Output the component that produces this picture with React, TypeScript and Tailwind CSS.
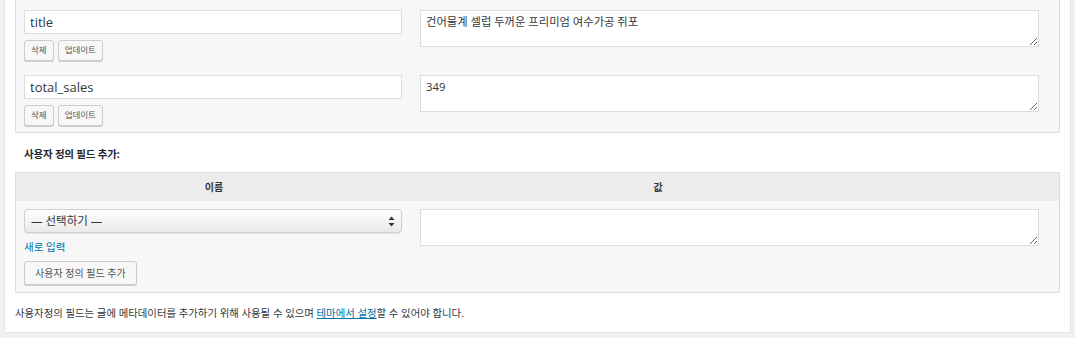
const font = { fontFamily: '"Open Sans", "Noto Sans CJK KR", sans-serif' }

type MetaRow = {
  name: string
  value: string
}

const rows: MetaRow[] = [
  { name: 'title', value: '건어물계 셀럽 두꺼운 프리미엄 여수가공 쥐포' },
  { name: 'total_sales', value: '349' },
]

const SmallButton = ({ label }: { label: string }) => (
  <button className="h-[21px] px-[6px] rounded-[3px] border border-[#cccccc] bg-[#f7f7f7] text-[8.5px] leading-none text-[#555] shadow-[0_1px_0_#cccccc]">
    {label}
  </button>
)

const Row = ({ row, last }: { row: MetaRow; last: boolean }) => (
  <div className={`flex ${last ? 'pb-[6px]' : 'pb-[14px]'}`}>
    <div className="w-[396px] shrink-0 pl-[8px]">
      <input
        readOnly
        value={row.name}
        className="block w-[378px] h-[24px] border border-[#dddddd] bg-white px-[5px] text-[13px] text-[#32373c] outline-none"
      />
      <div className="flex gap-[4px] mt-[6px]">
        <SmallButton label="삭제" />
        <SmallButton label="업데이트" />
      </div>
    </div>
    <div className="pl-[8px]">
      <textarea
        readOnly
        defaultValue={row.value}
        className="block w-[619px] h-[37px] border border-[#dddddd] bg-white px-[5px] py-[2px] text-[11.3px] leading-[18px] text-[#32373c] outline-none"
      />
    </div>
  </div>
)

export default function App() {
  return (
    <div className="w-[1075px] h-[338px] bg-[#f1f1f1] px-[4px] overflow-hidden" style={font}>
      <div className="h-[333px] bg-white border-x border-b border-[#e5e5e5] px-[10px]">
        {/* existing custom fields */}
        <div className="border-x border-b border-[#dddddd] bg-[#f7f7f7] pt-[10px]">
          {rows.map((row, i) => (
            <Row key={row.name} row={row} last={i === rows.length - 1} />
          ))}
        </div>

        <p className="mt-[13px] pl-[9px] text-[10.5px] tracking-[-0.2px] font-bold leading-[16px] text-[#23282d]">
          사용자 정의 필드 추가:
        </p>

        {/* add new field */}
        <div className="mt-[10px] border border-[#dddddd] bg-[#f7f7f7]">
          <div className="flex h-[28px] items-center bg-[#ececec] text-[10px] font-bold text-[#32373c]">
            <div className="w-[396px] text-center">이름</div>
            <div className="w-[492px] text-center">값</div>
          </div>
          <div className="flex pt-[8px] pb-[7px]">
            <div className="w-[396px] shrink-0 pl-[8px]">
              <div className="flex items-center justify-between w-[378px] h-[24px] rounded-[4px] border border-[#cfcfcf] bg-gradient-to-b from-white to-[#e9e9e9] pl-[6px] pr-[6px] text-[11.5px] text-[#32373c] shadow-[0_1px_1px_rgba(0,0,0,0.08)]">
                <span>— 선택하기 —</span>
                <svg width="7" height="11" viewBox="0 0 7 11">
                  <path d="M3.5 0.5 L6.5 4 L0.5 4 Z" fill="#333" />
                  <path d="M3.5 10.5 L6.5 7 L0.5 7 Z" fill="#333" />
                </svg>
              </div>
              <a className="block mt-[6px] text-[10.5px] leading-[16px] text-[#0073aa]">새로 입력</a>
              <button className="mt-[6px] h-[24px] px-[10px] rounded-[3px] border border-[#cccccc] bg-[#f7f7f7] text-[10px] leading-none text-[#555] shadow-[0_1px_0_#cccccc]">
                사용자 정의 필드 추가
              </button>
            </div>
            <div className="pl-[8px]">
              <textarea
                readOnly
                className="block w-[619px] h-[37px] border border-[#dddddd] bg-white outline-none"
              />
            </div>
          </div>
        </div>

        <p className="mt-[12px] text-[10.4px] leading-[16px] text-[#32373c]">
          사용자정의 필드는 글에 메타데이터를 추가하기 위해 사용될 수 있으며{' '}
          <a className="text-[#0073aa] underline">테마에서 설정</a>할 수 있어야 합니다.
        </p>
      </div>
    </div>
  )
}
